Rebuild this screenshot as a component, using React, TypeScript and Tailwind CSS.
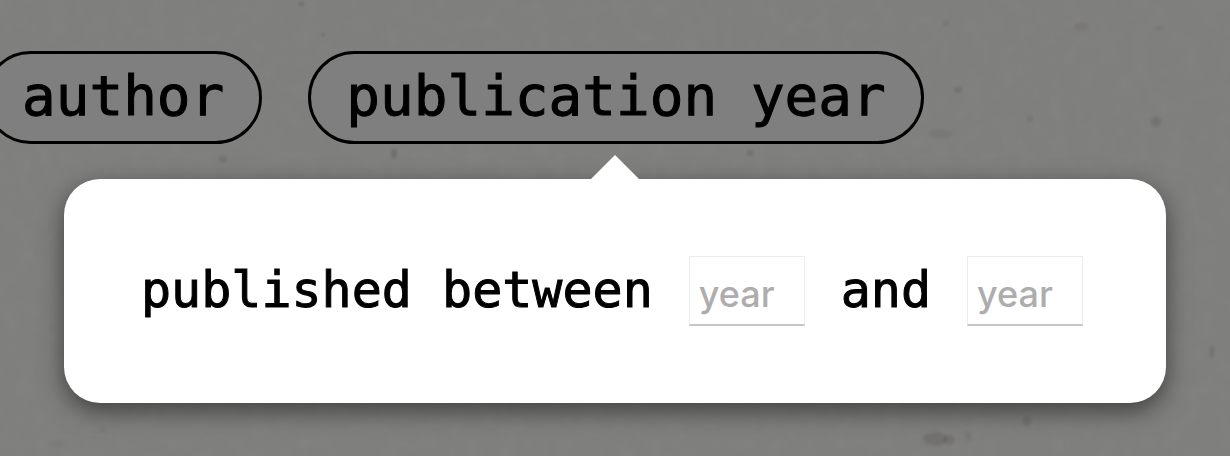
const marks = [
  [301, 4, 3, 2, 0.2],
  [323, 35, 2, 2, 0.15],
  [394, 154, 3, 5, 0.2],
  [223, 159, 4, 4, 0.12],
  [750, 153, 3, 3, 0.18],
  [940, 134, 12, 5, 0.07],
  [958, 90, 4, 3, 0.14],
  [946, 23, 3, 3, 0.1],
  [1081, 27, 7, 4, 0.09],
  [1030, 119, 3, 3, 0.1],
  [935, 439, 12, 7, 0.15],
  [949, 440, 6, 5, 0.14],
  [968, 436, 3, 5, 0.09],
  [1027, 421, 4, 5, 0.14],
  [1212, 352, 2, 6, 0.18],
  [1160, 28, 5, 2, 0.09],
  [1156, 122, 5, 5, 0.15],
  [103, 430, 3, 3, 0.07],
  [56, 444, 8, 3, 0.06],
];

function PaperTexture() {
  return (
    <svg className="absolute inset-0 h-full w-full" aria-hidden="true">
      <defs>
        <filter id="grain">
          <feTurbulence type="fractalNoise" baseFrequency="0.06" numOctaves="3" seed="4" />
          <feColorMatrix values="0 0 0 0 0.35  0 0 0 0 0.34  0 0 0 0 0.32  0.5 0 0 0 -0.18" />
        </filter>
        <filter id="soft" x="-100%" y="-100%" width="300%" height="300%">
          <feGaussianBlur stdDeviation="1.8" />
        </filter>
      </defs>
      <rect width="100%" height="100%" filter="url(#grain)" opacity="0.3" />
      {marks.map(([x, y, rx, ry, o]) => (
        <ellipse key={`${x}-${y}`} cx={x} cy={y} rx={rx} ry={ry} fill="#302820" opacity={o} filter="url(#soft)" />
      ))}
    </svg>
  );
}

const pill =
  "h-[93px] shrink-0 rounded-full border-[3px] border-black bg-[#7f7f7f] px-[35px] pb-1 text-[56px] leading-none whitespace-pre [-webkit-text-stroke:1px_black]";
const phrase = "pb-[2px] [-webkit-text-stroke:1px_black]";
const yearInput =
  "h-[70px] w-[116px] border border-b-2 border-[#ececec] border-b-[#c6c6c6] bg-white px-[9px] pt-[6px] font-[Inter,sans-serif] text-[36px] font-medium placeholder:text-[#adadad]";

export default function App() {
  return (
    <main className="relative min-h-screen overflow-hidden bg-[#7f7f7e] pt-[51px] pb-[53px] font-['DejaVu_Sans_Mono',monospace] text-black">
      <PaperTexture />
      <nav className="relative -ml-4 flex gap-[46px]" aria-label="Search filters">
        <button className={pill}>author</button>
        <button className={pill}>publication year</button>
      </nav>
      <section className="relative mx-16 mt-[35px] flex h-[224px] items-center rounded-[36px] bg-white px-[77px] shadow-[0_8px_24px_rgba(0,0,0,0.5)]">
        <svg className="absolute -top-6 left-1/2 h-[25px] w-[50px] -translate-x-1/2" viewBox="0 0 50 25" fill="white" aria-hidden="true">
          <path d="M25 0 50 25H0Z" />
        </svg>
        <div className="flex items-center gap-9 text-[50px] leading-none whitespace-nowrap">
          <label htmlFor="from" className={phrase}>published between</label>
          <input id="from" placeholder="year" className={yearInput} />
          <label htmlFor="to" className={phrase}>and</label>
          <input id="to" placeholder="year" className={yearInput} />
        </div>
      </section>
    </main>
  );
}
